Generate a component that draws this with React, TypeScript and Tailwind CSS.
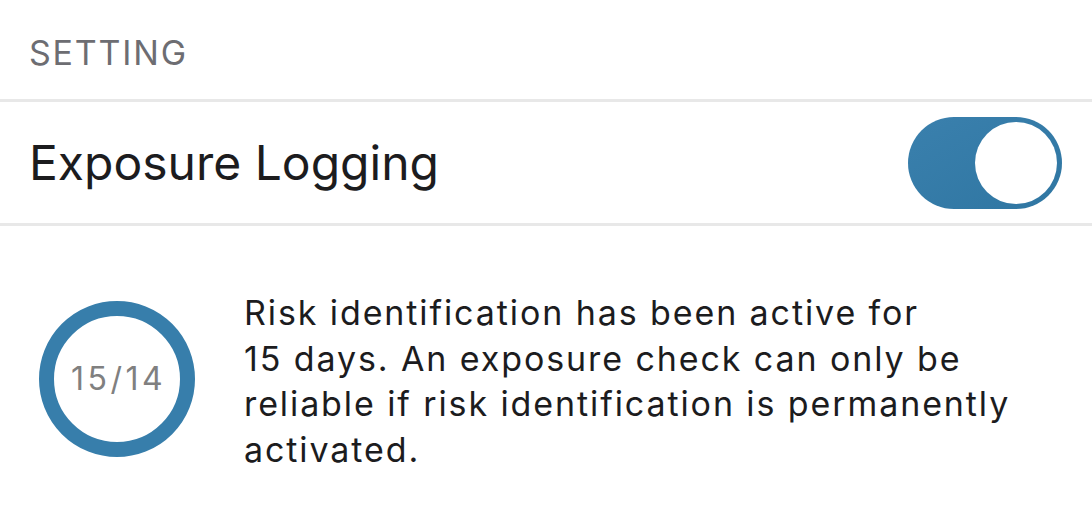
export default function App() {
  return (
    <div className="w-[1092px] h-[531px] bg-white overflow-hidden" style={{ fontFamily: 'Inter, "Noto Sans", sans-serif' }}>
      <div className="h-[99px] flex items-center pl-[29px] pt-[7px]">
        <span className="text-[34px] leading-none tracking-[1.8px] text-[#6d6d72]">SETTING</span>
      </div>
      <div className="h-[3px] bg-[#e8e8e8]" />
      <div className="h-[121px] flex items-center justify-between pl-[29px] pr-[30px]">
        <span className="text-[48px] leading-none text-[#1c1c1e]">Exposure Logging</span>
        <div className="w-[154px] h-[92px] rounded-full bg-gradient-to-br from-[#3a80ad] to-[#2f76a2] flex items-center justify-end pr-[5px]">
          <div className="w-[82px] h-[82px] rounded-full bg-white" />
        </div>
      </div>
      <div className="h-[3px] bg-[#e8e8e8]" />
      <div className="flex pl-[39px] pt-[64px]">
        <div className="w-[156px] h-[156px] mt-[11px] rounded-full border-[15px] border-[#377eab] flex items-center justify-center shrink-0">
          <span className="text-[32px] leading-none tracking-[3.5px] pl-[3px] text-[#808080]">15/14</span>
        </div>
        <p className="ml-[49px] w-[820px] text-[34px] leading-[45.5px] tracking-[1.9px] text-[#1c1c1e]">
          Risk identification has been active for
          <br />
          15 days. An exposure check can only be
          <br />
          reliable if risk identification is permanently
          <br />
          activated.
        </p>
      </div>
    </div>
  );
}
